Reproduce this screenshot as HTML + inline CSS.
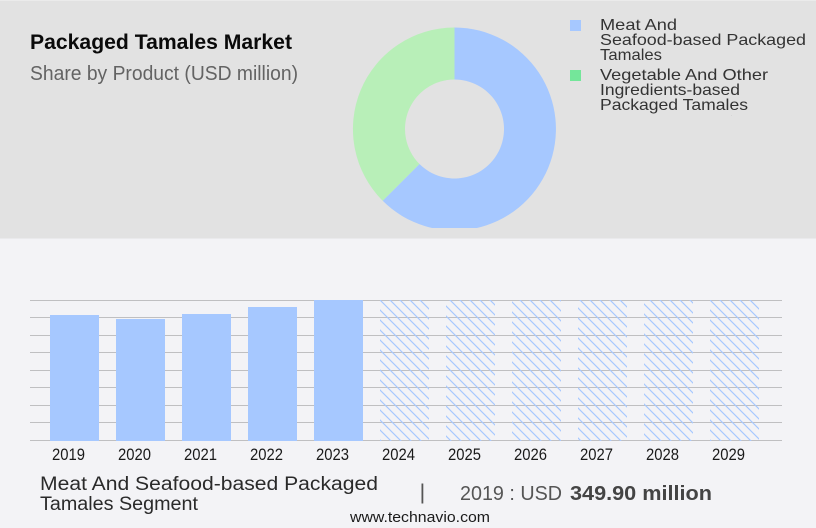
<!DOCTYPE html>
<html>
<head>
<meta charset="utf-8">
<style>
html,body{margin:0;padding:0;width:816px;height:528px;overflow:hidden;background:#f3f3f6}
svg{display:block}
text{font-family:"Liberation Sans","DejaVu Sans",sans-serif}
</style>
</head>
<body>
<svg width="816" height="528" viewBox="0 0 816 528" xmlns="http://www.w3.org/2000/svg">
<defs>
<pattern id="h" x="0" y="0" width="10" height="10" patternUnits="userSpaceOnUse">
<path d="M-2 -2L12 12M-2 8L2 12M8 -2L12 2" stroke="#a6c8ff" stroke-width="1.15" fill="none"/>
</pattern>
<clipPath id="c"><rect x="340" y="0" width="240" height="228"/></clipPath>
</defs>
<rect width="816" height="528" fill="#f3f3f6"/>
<rect y="1" width="816" height="237.500" fill="#e2e2e2"/>
<rect y="0" width="816" height="1" fill="#ebebeb"/>

<text x="30" y="49" font-size="21" font-weight="bold" fill="#0a0a0a" textLength="262" lengthAdjust="spacingAndGlyphs">Packaged Tamales Market</text>
<text x="30" y="80" font-size="20" fill="#636363" textLength="268" lengthAdjust="spacingAndGlyphs">Share by Product (USD million)</text>

<g clip-path="url(#c)">
<path d="M454.5 27.5A101.5 101.5 0 1 1 382.7 200.8L419.5 164A49.5 49.5 0 1 0 454.5 79.5Z" fill="#a6c8ff"/>
<path d="M454.5 27.5A101.5 101.5 0 0 0 382.7 200.8L419.5 164A49.5 49.5 0 0 1 454.5 79.5Z" fill="#b8efb8"/>
</g>

<rect x="570" y="20" width="11" height="11" fill="#a6c8ff"/>
<rect x="570" y="70" width="11" height="11" fill="#74e69a"/>
<g font-size="16" fill="#333">
<text x="600" y="30" textLength="77" lengthAdjust="spacingAndGlyphs">Meat And</text>
<text x="600" y="45" textLength="206" lengthAdjust="spacingAndGlyphs">Seafood-based Packaged</text>
<text x="600" y="60" textLength="62" lengthAdjust="spacingAndGlyphs">Tamales</text>
<text x="600" y="80" textLength="168" lengthAdjust="spacingAndGlyphs">Vegetable And Other</text>
<text x="600" y="95" textLength="140" lengthAdjust="spacingAndGlyphs">Ingredients-based</text>
<text x="600" y="110" textLength="148" lengthAdjust="spacingAndGlyphs">Packaged Tamales</text>
</g>
<rect x="731" y="115" width="1" height="1" fill="#d6d6d6"/>

<g fill="#bfbfc1">
<rect x="30" y="300" width="752" height="1"/>
<rect x="30" y="317" width="752" height="1"/>
<rect x="30" y="335" width="752" height="1"/>
<rect x="30" y="352" width="752" height="1"/>
<rect x="30" y="370" width="752" height="1"/>
<rect x="30" y="387" width="752" height="1"/>
<rect x="30" y="405" width="752" height="1"/>
<rect x="30" y="422" width="752" height="1"/>
<rect x="30" y="440" width="752" height="1"/>
</g>

<g fill="#a6c8ff">
<rect x="50" y="315" width="49" height="126"/>
<rect x="116" y="319" width="49" height="122"/>
<rect x="182" y="314" width="49" height="127"/>
<rect x="248" y="307" width="49" height="134"/>
<rect x="314" y="300" width="49" height="141"/>
</g>
<g fill="url(#h)">
<rect x="380" y="300" width="49" height="141"/>
<rect x="446" y="300" width="49" height="141"/>
<rect x="512" y="300" width="49" height="141"/>
<rect x="578" y="300" width="49" height="141"/>
<rect x="644" y="300" width="49" height="141"/>
<rect x="710" y="300" width="49" height="141"/>
</g>

<g font-size="16.500" fill="#1a1a1a">
<text x="52" y="460" textLength="33" lengthAdjust="spacingAndGlyphs">2019</text>
<text x="118" y="460" textLength="33" lengthAdjust="spacingAndGlyphs">2020</text>
<text x="184" y="460" textLength="33" lengthAdjust="spacingAndGlyphs">2021</text>
<text x="250" y="460" textLength="33" lengthAdjust="spacingAndGlyphs">2022</text>
<text x="316" y="460" textLength="33" lengthAdjust="spacingAndGlyphs">2023</text>
<text x="382" y="460" textLength="33" lengthAdjust="spacingAndGlyphs">2024</text>
<text x="448" y="460" textLength="33" lengthAdjust="spacingAndGlyphs">2025</text>
<text x="514" y="460" textLength="33" lengthAdjust="spacingAndGlyphs">2026</text>
<text x="580" y="460" textLength="33" lengthAdjust="spacingAndGlyphs">2027</text>
<text x="646" y="460" textLength="33" lengthAdjust="spacingAndGlyphs">2028</text>
<text x="712" y="460" textLength="33" lengthAdjust="spacingAndGlyphs">2029</text>
</g>

<g font-size="19" fill="#2a2a2a">
<text x="40" y="490" textLength="338" lengthAdjust="spacingAndGlyphs">Meat And Seafood-based Packaged</text>
<text x="40" y="510" textLength="158" lengthAdjust="spacingAndGlyphs">Tamales Segment</text>
</g>
<rect x="421.500" y="483.500" width="1.800" height="20" fill="#555"/>
<text x="460" y="500" font-size="20.500" fill="#555" textLength="102" lengthAdjust="spacingAndGlyphs">2019 : USD</text>
<text x="570" y="500" font-size="20.500" font-weight="bold" fill="#444" textLength="142" lengthAdjust="spacingAndGlyphs">349.90 million</text>
<text x="350" y="522" font-size="15" fill="#1a1a1a" textLength="140" lengthAdjust="spacingAndGlyphs">www.technavio.com</text>
</svg>
</body>
</html>
